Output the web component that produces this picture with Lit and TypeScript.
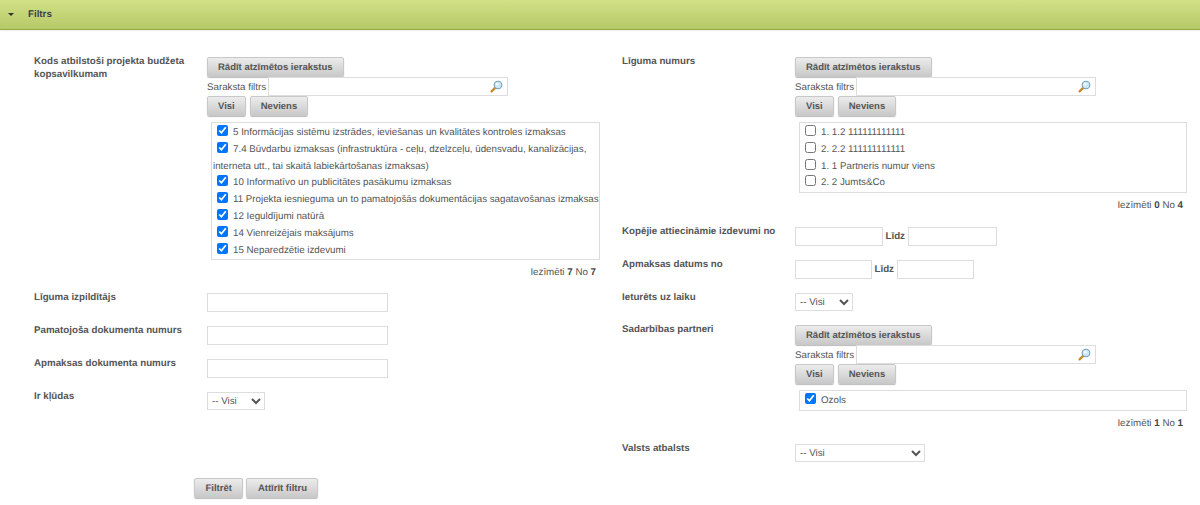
import { LitElement, html, css } from "lit";
import { customElement } from "lit/decorators.js";

const lens = html`<svg class="lens" width="13" height="13" viewBox="0 0 13 13">
  <path d="M5.6 7.4 1.6 11.4" stroke="#c8882c" stroke-width="2.2" stroke-linecap="round" fill="none"/>
  <circle cx="8" cy="5" r="3.8" fill="#cfe6f5" stroke="#6f9fbd" stroke-width="1.1"/>
  <circle cx="7.2" cy="4.2" r="1.4" fill="#f4fbff"/>
</svg>`;

@customElement("app-root")
export class AppRoot extends LitElement {
  static styles = css`
    :host {
      display: block;
      width: 1200px;
      height: 505px;
      overflow: hidden;
      background: #fff;
      font-family: "Liberation Sans", Arial, sans-serif;
      font-size: 9.75px;
      color: #555;
      text-rendering: geometricPrecision;
    }
    .head {
      height: 30px;
      box-sizing: border-box;
      background: linear-gradient(#d2e086, #b6c968);
      border-bottom: 1px solid #94a83f;
      display: flex;
      align-items: center;
      padding-left: 8px;
      font-weight: bold;
      color: #3d3d4a;
      box-shadow: 0 1px 2px #eee;
    }
    .caret {
      width: 0;
      height: 0;
      border: 3px solid transparent;
      border-top: 3px solid #333;
      border-bottom: 0;
      margin-right: 14px;
    }
    .cols {
      display: grid;
      grid-template-columns: 588px 1fr;
      padding: 27px 13px 0 34px;
    }
    .cols > div { min-width: 0; }
    .row { display: flex; margin-bottom: 14px; }
    .row.m15 { margin-bottom: 15px; }
    .lbl {
      width: 173px;
      flex: none;
      box-sizing: border-box;
      padding-right: 14px;
      margin-top: -2px;
      line-height: 13px;
      font-weight: bold;
      color: #555;
    }
    .ctl { flex: 1; min-width: 0; }
    .btn {
      display: inline-block;
      box-sizing: border-box;
      height: 20px;
      padding: 0 10px;
      border: 1px solid #c8c8c8;
      border-radius: 2px;
      background: linear-gradient(#ececec, #c9c9c9);
      font: bold 9.5px "Liberation Sans", Arial, sans-serif;
      text-rendering: geometricPrecision;
      color: #555;
      box-shadow: 0 1px 1px #bbb;
    }
    .btns { display: flex; gap: 4px; }
    .filter { display: flex; align-items: center; gap: 2px; height: 19px; }
    .filter span { position: relative; top: 1px; }
    .field {
      box-sizing: border-box;
      height: 19px;
      border: 1px solid #ddd;
      background: #fff;
      padding: 0;
      display: block;
      font: inherit;
    }
    .search { width: 240px; position: relative; }
    .lens { position: absolute; right: 4px; top: 2px; }
    .w181 { width: 181px; }
    .w88 { width: 88px; }
    .w89 { width: 89px; }
    .w77 { width: 77px; }
    .range { display: flex; align-items: center; gap: 2.5px; font-weight: bold; }
    .list {
      box-sizing: border-box;
      margin: 6px 0 0 4px;
      border: 1px solid #ddd;
      padding: 2px 0 0 1px;
      line-height: 16.8px;
      min-height: 21px;
    }
    .left .list { width: 389px; height: 138px; }
    .right .list { width: 388px; }
    .item input {
      width: 11px;
      height: 11px;
      margin: 0 5px 0 4px;
      vertical-align: -1px;
    }
    .count { text-align: right; padding-right: 4px; line-height: 12px; box-sizing: border-box; }
    .count b { color: #444; }
    .left .count { width: 393px; margin-top: 7px; }
    .right .count { width: 392px; margin-top: 7px; }
    select {
      box-sizing: border-box;
      height: 18px;
      border: 1px solid #ddd;
      background: #fff;
      color: #555;
      font: 9.75px "Liberation Sans", Arial, sans-serif;
      text-rendering: geometricPrecision;
      display: block;
      padding: 0;
    }
    .s58 { width: 58px; }
    .s130 { width: 130px; }
    .actions { display: flex; gap: 3px; margin: 2px 0 0 194px; }
    .actions .btn { padding: 0 10.5px; }
  `;

  private picker(checked: boolean, items: string[], total: number) {
    return html`
      <button class="btn">Rādīt atzīmētos ierakstus</button>
      <div class="filter">
        <span>Saraksta filtrs</span>
        <div class="field search">${lens}</div>
      </div>
      <div class="btns"><button class="btn">Visi</button><button class="btn">Neviens</button></div>
      <div class="list">
        ${items.map((t) => html`<div class="item"><input type="checkbox" .checked=${checked} />${t}</div>`)}
      </div>
      <div class="count">Iezīmēti <b>${checked ? total : 0}</b> No <b>${total}</b></div>
    `;
  }

  render() {
    return html`
      <div class="head"><span class="caret"></span>Filtrs</div>
      <div class="cols">
        <div class="left">
          <div class="row">
            <div class="lbl">Kods atbilstoši projekta budžeta kopsavilkumam</div>
            <div class="ctl">${this.picker(true, [
              "5 Informācijas sistēmu izstrādes, ieviešanas un kvalitātes kontroles izmaksas",
              "7.4 Būvdarbu izmaksas (infrastruktūra - ceļu, dzelzceļu, ūdensvadu, kanalizācijas, interneta utt., tai skaitā labiekārtošanas izmaksas)",
              "10 Informatīvo un publicitātes pasākumu izmaksas",
              "11 Projekta iesnieguma un to pamatojošās dokumentācijas sagatavošanas izmaksas",
              "12 Ieguldījumi natūrā",
              "14 Vienreizējais maksājums",
              "15 Neparedzētie izdevumi",
            ], 7)}</div>
          </div>
          <div class="row"><div class="lbl">Līguma izpildītājs</div><div class="ctl"><input class="field w181" /></div></div>
          <div class="row"><div class="lbl">Pamatojoša dokumenta numurs</div><div class="ctl"><input class="field w181" /></div></div>
          <div class="row"><div class="lbl">Apmaksas dokumenta numurs</div><div class="ctl"><input class="field w181" /></div></div>
          <div class="row"><div class="lbl">Ir kļūdas</div><div class="ctl"><select class="s58"><option>-- Visi</option></select></div></div>
        </div>
        <div class="right">
          <div class="row m15">
            <div class="lbl">Līguma numurs</div>
            <div class="ctl">${this.picker(false, [
              "1. 1.2 111111111111",
              "2. 2.2 111111111111",
              "1. 1 Partneris numur viens",
              "2. 2 Jumts&Co",
            ], 4)}</div>
          </div>
          <div class="row"><div class="lbl">Kopējie attiecināmie izdevumi no</div><div class="ctl range"><input class="field w88" />Līdz<input class="field w89" /></div></div>
          <div class="row"><div class="lbl">Apmaksas datums no</div><div class="ctl range"><input class="field w77" />Līdz<input class="field w77" /></div></div>
          <div class="row"><div class="lbl">Ieturēts uz laiku</div><div class="ctl"><select class="s58"><option>-- Visi</option></select></div></div>
          <div class="row">
            <div class="lbl">Sadarbības partneri</div>
            <div class="ctl">${this.picker(true, ["Ozols"], 1)}</div>
          </div>
          <div class="row"><div class="lbl">Valsts atbalsts</div><div class="ctl"><select class="s130"><option>-- Visi</option></select></div></div>
        </div>
      </div>
      <div class="actions"><button class="btn">Filtrēt</button><button class="btn">Attīrīt filtru</button></div>
    `;
  }
}
